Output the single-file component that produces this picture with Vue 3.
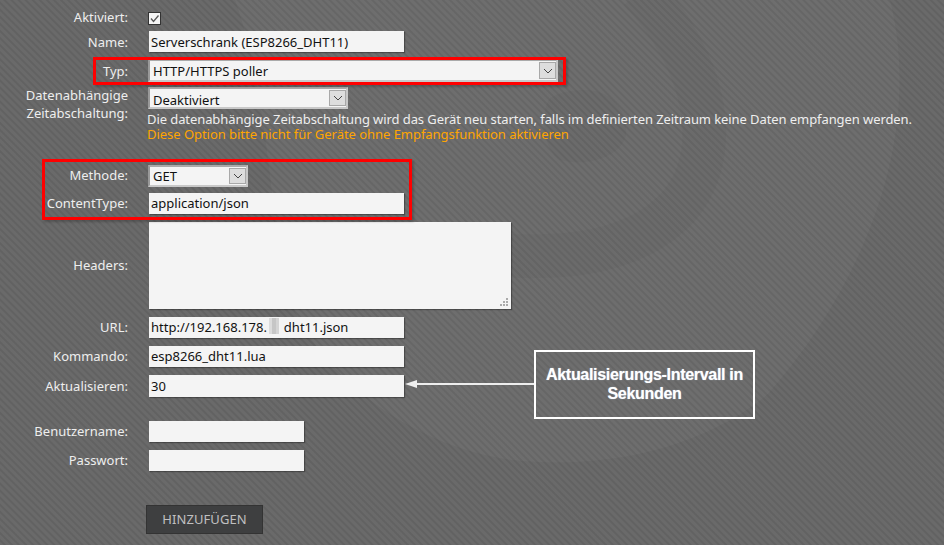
<script setup>
import { ref } from 'vue'

const enabled = ref(true)
const form = ref({
  name: 'Serverschrank (ESP8266_DHT11)',
  typ: 'HTTP/HTTPS poller',
  timeout: 'Deaktiviert',
  method: 'GET',
  contentType: 'application/json',
  headers: '',
  url: 'http://192.168.178.     dht11.json',
  command: 'esp8266_dht11.lua',
  interval: '30',
  user: '',
  password: ''
})
</script>

<template>
  <div class="page">
    <svg class="logo" viewBox="0 0 944 545" aria-hidden="true">
      <path class="disc" d="M235 0 L890 0 C925 140 860 290 767 395 C700 450 600 470 512 460 C400 445 300 360 280 270 C270 170 260 70 235 0 Z" />
      <path class="ring" d="M640 -10 C705 60 725 150 680 205 C630 262 540 262 440 250" />
      <path class="hole" d="M585 90 C615 90 628 115 626 135 C622 155 590 168 560 160 C542 150 540 110 550 98 C560 92 572 90 585 90 Z" />
    </svg>

    <form class="form" @submit.prevent>
      <div class="row row-check">
        <label>Aktiviert:</label>
        <span class="check" @click="enabled = !enabled">
          <svg v-if="enabled" viewBox="0 0 11 11"><path d="M2 5.5 L4.5 8.5 L9.5 2.5" /></svg>
        </span>
      </div>
      <div class="row row-name">
        <label>Name:</label>
        <input v-model="form.name" class="wide" />
      </div>
      <div class="row row-typ">
        <label>Typ:</label>
        <div class="select select-typ">
          <select v-model="form.typ"><option>HTTP/HTTPS poller</option></select>
          <span class="chev"><svg viewBox="0 0 10 6"><path d="M1 1 L5 5 L9 1" /></svg></span>
        </div>
      </div>
      <div class="row row-timeout">
        <label>Datenabhängige<br />Zeitabschaltung:</label>
        <div class="timeout">
          <div class="select select-timeout">
            <select v-model="form.timeout"><option>Deaktiviert</option></select>
            <span class="chev"><svg viewBox="0 0 10 6"><path d="M1 1 L5 5 L9 1" /></svg></span>
          </div>
          <p class="hint">Die datenabhängige Zeitabschaltung wird das Gerät neu starten, falls im definierten Zeitraum keine Daten empfangen werden.</p>
          <p class="warn">Diese Option bitte nicht für Geräte ohne Empfangsfunktion aktivieren</p>
        </div>
      </div>
      <div class="row row-method shift">
        <label>Methode:</label>
        <div class="select select-method">
          <select v-model="form.method"><option>GET</option></select>
          <span class="chev"><svg viewBox="0 0 10 6"><path d="M1 1 L5 5 L9 1" /></svg></span>
        </div>
      </div>
      <div class="row row-ct shift">
        <label>ContentType:</label>
        <input v-model="form.contentType" class="wide" />
      </div>
      <div class="row row-headers shift">
        <label>Headers:</label>
        <div class="area">
          <textarea v-model="form.headers"></textarea>
          <svg class="grip" viewBox="0 0 8 8"><path d="M6 0h2v2H6zM3 3h2v2H3zM6 3h2v2H6zM0 6h2v2H0zM3 6h2v2H3zM6 6h2v2H6z" /></svg>
        </div>
      </div>
      <div class="row row-url shift">
        <label>URL:</label>
        <div class="url">
          <input v-model="form.url" class="wide" />
          <span class="blur"></span>
        </div>
      </div>
      <div class="row row-cmd shift">
        <label>Kommando:</label>
        <input v-model="form.command" class="wide" />
      </div>
      <div class="row row-int">
        <label>Aktualisieren:</label>
        <input v-model="form.interval" class="wide tall" />
      </div>
      <div class="row row-user shift">
        <label>Benutzername:</label>
        <input v-model="form.user" class="short" />
      </div>
      <div class="row row-pass shift">
        <label>Passwort:</label>
        <input v-model="form.password" class="short" type="password" />
      </div>
      <button class="submit" type="submit">HINZUFÜGEN</button>
    </form>

    <!-- annotations drawn on top of the screenshot -->
    <div class="mark mark-typ"></div>
    <div class="mark mark-method"></div>
    <svg class="arrow" viewBox="0 0 131 12"><path d="M0 6 L12 2 L12 5 L131 5 L131 7 L12 7 L12 10 Z" /></svg>
    <div class="callout">Aktualisierungs-Intervall in Sekunden</div>
  </div>
</template>

<style>
html, body { margin: 0; background: #686868; }
</style>

<style scoped>
.page {
  position: relative;
  width: 944px;
  height: 545px;
  overflow: hidden;
  background-color: #666;
  background-image: repeating-linear-gradient(45deg, #6a6a6a 0, #6a6a6a 2px, #626262 3px, #626262 4px, #6a6a6a 5px);
  font-family: "Noto Sans", "Open Sans", sans-serif;
  font-size: 13px;
  color: #eee;
}
.logo { position: absolute; inset: 0; width: 944px; height: 545px; }
.disc { fill: rgba(255, 255, 255, 0.03); }
.ring { fill: none; stroke: rgba(0, 0, 0, 0.02); stroke-width: 44px; }
.hole { fill: rgba(0, 0, 0, 0.025); }

.form { position: relative; padding-top: 9px; }
.row {
  display: grid;
  grid-template-columns: 128px 1fr;
  column-gap: 21px;
  align-items: center;
}
label { text-align: right; line-height: 16px; }
p { margin: 0; }

input, textarea, select {
  box-sizing: border-box;
  border: 0;
  margin: 0;
  outline: 0;
  background: #f4f4f4;
  color: #111;
  font: inherit;
  border-radius: 0;
}
input { height: 21px; padding: 0 2px; box-shadow: 1px 1px 1px rgba(0,0,0,.3); display: block; }
.wide { width: 255px; }
.tall { height: 22px; }
.short { width: 155px; }

/* these rows sit a pixel high in the reference */
.shift label { margin-bottom: 2px; }
.shift input { padding-bottom: 2px; }

.row-check { height: 17px; }
.row-check label { margin-bottom: 2px; }
.row-name { margin-top: 5px; }
.row-typ { margin-top: 7px; }
.row-timeout { margin-top: 5px; align-items: start; }
.row-timeout label { line-height: 18px; margin-top: -1px; }
.row-method { margin-top: 23px; }
.row-ct { margin-top: 6px; }
.row-headers { margin-top: 8px; }
.row-url { margin-top: 8px; }
.row-cmd { margin-top: 8px; }
.row-int { margin-top: 8px; }
.row-user { margin-top: 24px; }
.row-pass { margin-top: 8px; }

.check {
  width: 11px;
  height: 11px;
  margin-left: -1px;
  border: 1px solid #333;
  background: #f4f4f4;
  display: block;
}
.check svg { display: block; width: 11px; height: 11px; }
.check path { fill: none; stroke: #555; stroke-width: 1.3px; }

.select {
  position: relative;
  box-sizing: border-box;
  margin-left: -1px;
  border: 2px solid #c8c8c8;
  border-left-color: #999;
  border-top-color: #aaa;
  background: #f4f4f4;
}
.select select {
  display: block;
  width: 100%;
  height: 100%;
  padding: 0 0 0 3px;
  appearance: none;
}
.select-typ { width: 410px; height: 23px; }
.select-timeout { width: 200px; height: 22px; }
.select-timeout select { padding-top: 2px; }
.select-method { width: 100px; height: 22px; }
.select-method select { padding-bottom: 2px; }
.chev {
  position: absolute;
  right: 0;
  top: 1px;
  bottom: 1px;
  width: 17px;
  box-sizing: border-box;
  border: 1px solid #a8a8a8;
  background: #ddd;
  display: flex;
  align-items: center;
  justify-content: center;
  pointer-events: none;
}
.chev svg { width: 10px; height: 6px; }
.chev path { fill: none; stroke: #444; stroke-width: 1px; }

.hint { margin-top: 3px; margin-left: -2px; line-height: 15px; white-space: nowrap; letter-spacing: -.083px; }
.warn { margin-left: -2px; line-height: 15px; color: #ffa500; white-space: nowrap; letter-spacing: -.04px; }

.area { position: relative; width: 362px; height: 87px; }
textarea { display: block; width: 362px; height: 87px; resize: none; padding: 2px; box-shadow: 1px 1px 1px rgba(0,0,0,.3); }
.grip { position: absolute; right: 3px; bottom: 3px; width: 8px; height: 8px; fill: #aaa; }

.url { position: relative; }
.blur {
  position: absolute;
  left: 120px;
  top: 1px;
  width: 10px;
  height: 16px;
  background: linear-gradient(90deg, #dcdcdc 0 30%, #c6c6c6 30% 70%, #d4d4d4 70%);
}

.submit {
  display: block;
  margin: 34px 0 0 146px;
  width: 117px;
  height: 29px;
  box-sizing: border-box;
  border: 1px solid #333;
  padding: 0 0 2px;
  background: #3e3f40;
  color: #c0c0c0;
  font: inherit;
  letter-spacing: .1px;
}

.mark { position: absolute; box-sizing: border-box; border: 3px solid #f00; box-shadow: 2px 2px 2px rgba(0,0,0,.2); }
.mark-typ { left: 93px; top: 57px; width: 473px; height: 28px; }
.mark-method { left: 42px; top: 159px; width: 370px; height: 61px; }

.arrow { position: absolute; left: 405px; top: 378px; width: 131px; height: 12px; fill: #eee; }
.callout {
  position: absolute;
  left: 534px;
  top: 350px;
  width: 221px;
  height: 69px;
  box-sizing: border-box;
  border: 2px solid #fff;
  padding: 0 8px 2px;
  display: flex;
  align-items: center;
  justify-content: center;
  text-align: center;
  font-family: "Liberation Sans", Arial, sans-serif;
  font-size: 16px;
  font-weight: 700;
  line-height: 19px;
  letter-spacing: -.3px;
  color: #fff;
  text-shadow: 0 0 1px #bcd;
}
</style>
